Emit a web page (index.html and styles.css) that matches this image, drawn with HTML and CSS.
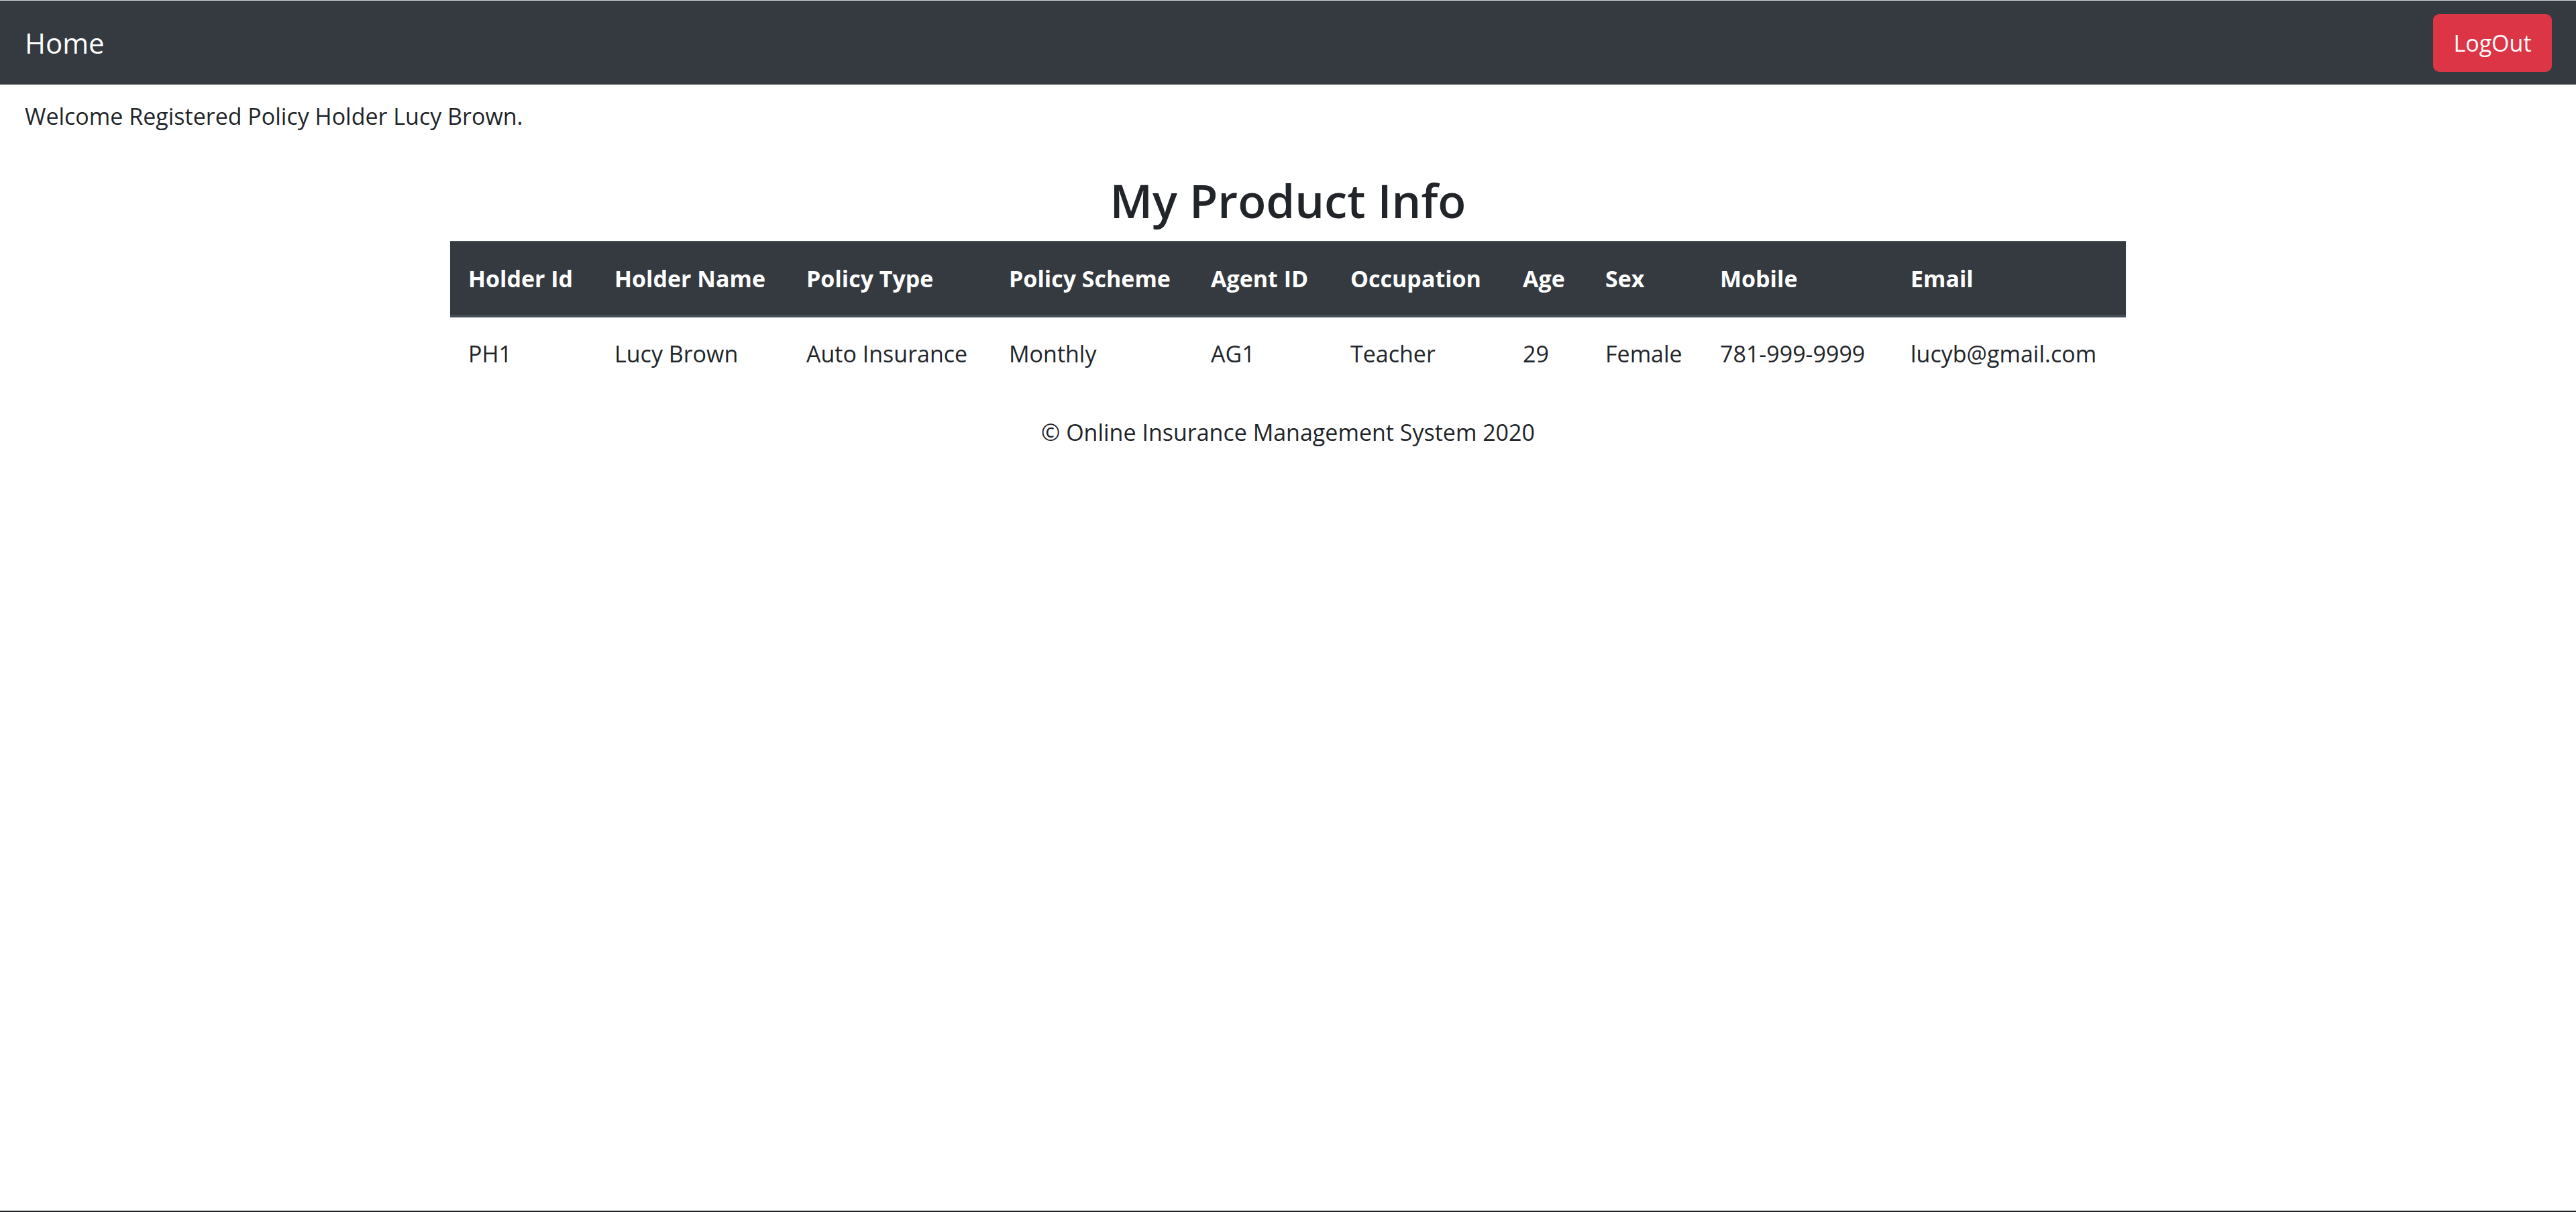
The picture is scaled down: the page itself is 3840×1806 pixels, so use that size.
FILE: index.html
```html
<!DOCTYPE html>
<html lang="en">
<head>
<meta charset="utf-8">
<title>My Product Info</title>
<link rel="stylesheet" href="styles.css">
</head>
<body>
<div class="page">
  <nav class="navbar">
    <a class="brand" href="#">Home</a>
    <button class="btn-logout" type="button">LogOut</button>
  </nav>
  <p class="welcome">Welcome Registered Policy Holder Lucy Brown.</p>
  <main class="content">
    <h2 class="title">My Product Info</h2>
    <table class="info-table">
      <colgroup>
        <col class="c-id"><col class="c-name"><col class="c-type"><col class="c-scheme"><col class="c-agent">
        <col class="c-occ"><col class="c-age"><col class="c-sex"><col class="c-mobile"><col class="c-email">
      </colgroup>
      <thead>
        <tr>
          <th>Holder Id</th><th>Holder Name</th><th>Policy Type</th><th>Policy Scheme</th><th>Agent ID</th>
          <th>Occupation</th><th>Age</th><th>Sex</th><th>Mobile</th><th>Email</th>
        </tr>
      </thead>
      <tbody>
        <tr>
          <td>PH1</td><td>Lucy Brown</td><td>Auto Insurance</td><td>Monthly</td><td>AG1</td>
          <td>Teacher</td><td>29</td><td>Female</td><td>781-999-9999</td><td>lucyb@gmail.com</td>
        </tr>
      </tbody>
    </table>
    <p class="footer">© Online Insurance Management System 2020</p>
  </main>
</div>
</body>
</html>
```
FILE: styles.css
```css
* { box-sizing: border-box; }
html, body { margin: 0; padding: 0; }
body {
  font-family: "Open Sans", "Noto Sans", "Liberation Sans", sans-serif;
  font-size: 34px;
  line-height: 54px;
  color: #212529;
  background: #fff;
}
.page {
  min-height: 100vh;
  border-top: 1px solid #d4d4d4;
  border-bottom: 2px solid #202124;
  display: flex;
  flex-direction: column;
}
.navbar {
  height: 125px;
  background: #343a40;
  display: flex;
  align-items: center;
  justify-content: space-between;
  padding: 0 36px 0 37px;
}
.brand {
  color: #fff;
  text-decoration: none;
  font-size: 42px;
  line-height: 67px;
}
.btn-logout {
  background: #dc3545;
  color: #fff;
  border: none;
  border-radius: 9px;
  font-family: inherit;
  font-size: 34px;
  line-height: 54px;
  height: 86px;
  width: 177px;
  padding: 0;
}
.welcome {
  margin: 20px 0 0 37px;
}
.content {
  width: 2498px;
  margin: 0 auto;
}
.title {
  text-align: center;
  font-weight: 600;
  font-size: 69px;
  line-height: 86px;
  margin: 55px 0 18px;
}
.info-table {
  width: 100%;
  table-layout: fixed;
  border-collapse: collapse;
}
.c-id { width: 218px; }
.c-name { width: 286px; }
.c-type { width: 302px; }
.c-scheme { width: 301px; }
.c-agent { width: 208px; }
.c-occ { width: 257px; }
.c-age { width: 123px; }
.c-sex { width: 171px; }
.c-mobile { width: 284px; }
.c-email { width: 348px; }
.info-table th {
  background: #343a40;
  color: #fff;
  font-weight: 700;
  text-align: left;
  padding: 27px;
  border-top: 2px solid #454d55;
  border-bottom: 4px solid #454d55;
  white-space: nowrap;
}
.info-table td {
  padding: 27px;
  white-space: nowrap;
}
.footer {
  text-align: center;
  margin: 36px 0 0;
}
```
